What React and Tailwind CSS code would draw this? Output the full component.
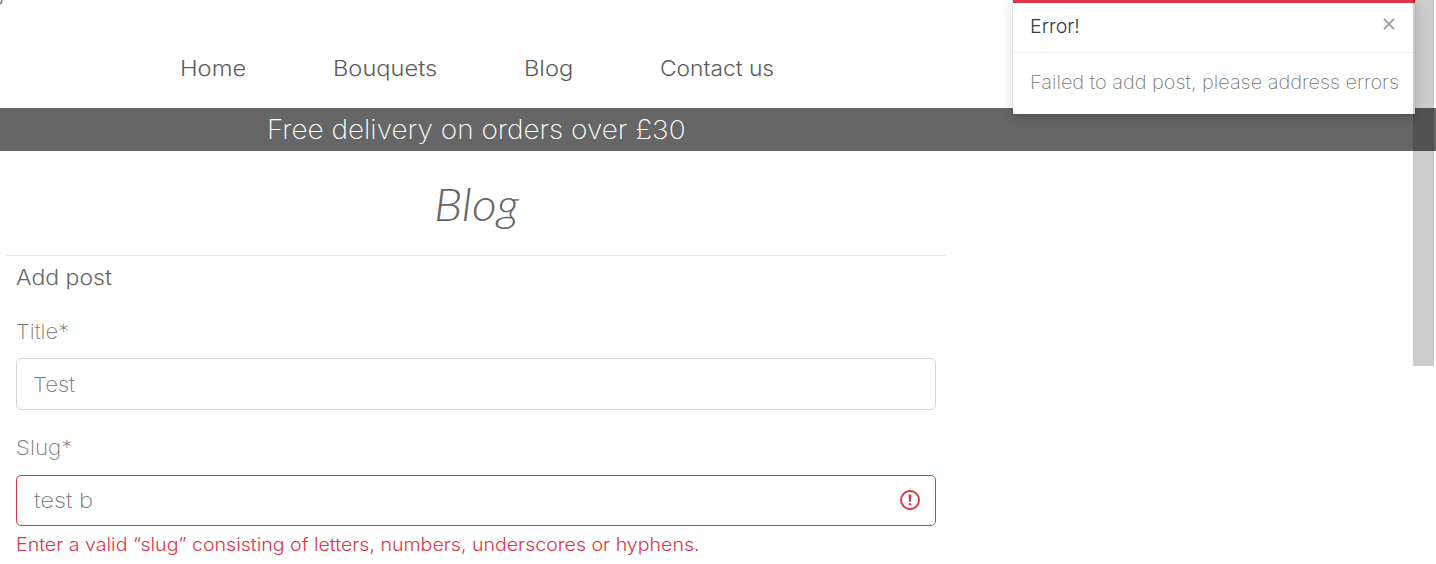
import React from "react";

const links = [
  { label: "Home", box: "w-[66px]", stretch: "scale-x-[1.105]" },
  { label: "Bouquets", box: "w-[104px]", stretch: "scale-x-[1.1]" },
  { label: "Blog", box: "w-[49px]", stretch: "scale-x-[1.1]" },
  { label: "Contact us", box: "w-[115px]", stretch: "scale-x-[1.06]" },
];

function AlertIcon() {
  return (
    <svg className="mr-[15px] mb-px h-5 w-5 shrink-0" viewBox="0 0 20 20" fill="none" stroke="#dc3545">
      <circle cx="10" cy="10" r="9" strokeWidth="1.9" />
      <path d="M8.6 4.6h2.8l-.5 7.2H9.1z" fill="#dc3545" stroke="none" />
      <circle cx="10" cy="14.2" r="1.2" fill="#dc3545" stroke="none" />
    </svg>
  );
}

function Header() {
  return (
    <header>
      <nav className="flex h-[108px] gap-[87px] pt-[53px] pl-[179.5px] text-[21.5px] leading-[30px] font-light text-[#5c5c5c]">
        {links.map((l) => (
          <a key={l.label} className={`${l.box} whitespace-nowrap`}>
            <span className={`inline-block origin-left ${l.stretch}`}>{l.label}</span>
          </a>
        ))}
      </nav>
      <div className="h-[43px] bg-[#666] pl-[267px] text-[26.5px] leading-[43px] font-extralight whitespace-nowrap text-white">
        <span className="inline-block origin-left scale-x-[1.055]">Free delivery on orders over £30</span>
      </div>
    </header>
  );
}

function PostForm() {
  return (
    <main className="w-[952px] pl-[6px]">
      <h1 className="h-[104px] w-[940px] pt-[25px] text-center font-['Lato',sans-serif] text-[46px] leading-[56px] font-light text-[#666] italic">
        <span className="inline-block scale-x-[1.05]">Blog</span>
      </h1>
      <div className="h-px w-[940px] bg-[#e3e3e3]" />
      <form className="flex w-[930px] flex-col pl-[10px]">
        <h2 className="mt-[6px] text-[21.5px] leading-[30px] font-[350] text-[#666]">
          <span className="inline-block origin-left scale-x-[1.07]">Add post</span>
        </h2>
        <label className="mt-[25px] text-[20.5px] leading-[30px] font-extralight text-[#777]">
          <span className="inline-block origin-left scale-x-[1.07]">Title*</span>
        </label>
        <div className="mt-[11px] flex h-[52px] items-center rounded-[5px] border border-[#ced4da] pt-[2px] pl-[16px] text-[20.5px] font-extralight text-[#6c757d]">
          <span className="inline-block origin-left scale-x-[1.08]">Test</span>
        </div>
        <label className="mt-[23px] text-[20.5px] leading-[30px] font-extralight text-[#777]">
          <span className="inline-block origin-left scale-x-[1.09]">Slug*</span>
        </label>
        <div className="mt-3 flex h-[51px] items-center justify-between rounded-[5px] border border-[#dc3545] pl-[17px] text-[20.5px] font-extralight text-[#6c757d]">
          <span className="inline-block origin-left scale-x-[1.16] pt-[2px]">test b</span>
          <AlertIcon />
        </div>
        <p className="mt-1 text-[18px] leading-[30px] font-light whitespace-nowrap text-[#dc3545]">
          <span className="inline-block origin-left scale-x-[1.088]">
            Enter a valid “slug” consisting of letters, numbers, underscores or hyphens.
          </span>
        </p>
      </form>
    </main>
  );
}

function Toast() {
  return (
    <div className="absolute top-0 right-[21px] h-[114px] w-[402px] border-t-[3px] border-[#dc3545] bg-white shadow-[0_4px_12px_rgba(0,0,0,0.16),0_0_1px_rgba(0,0,0,0.3)]">
      <div className="flex h-[50px] justify-between border-b border-[#efefef] pr-5 pl-[17px] text-[18.5px] leading-[47px] font-light text-[#343a40]">
        <span className="inline-block origin-left scale-x-[1.06]">Error!</span>
        <svg className="mt-[15px] h-3 w-3" viewBox="0 0 12 12" fill="none" stroke="#999fa3" strokeWidth="1.8">
          <path d="M.8.8l10.4 10.4M11.2.8L.8 11.2" />
        </svg>
      </div>
      <p className="pt-[14px] pl-[17px] text-[18.5px] leading-[30px] font-extralight whitespace-nowrap text-[#777]">
        <span className="inline-block origin-left scale-x-[1.076]">Failed to add post, please address errors</span>
      </p>
    </div>
  );
}

export default function App() {
  return (
    <div className="relative h-[564px] w-[1436px] overflow-hidden bg-white font-['Inter',sans-serif]">
      <Header />
      <PostForm />
      <Toast />
      <div className="absolute top-0 right-[2px] h-[366px] w-[21px] bg-black/20" />
      <svg className="absolute top-0 left-0 h-[6px] w-[4px]" viewBox="0 0 4 6" fill="none" stroke="#777" strokeWidth="1.6">
        <path d="M2 0Q1.6 3 0 4.2" />
      </svg>
    </div>
  );
}
